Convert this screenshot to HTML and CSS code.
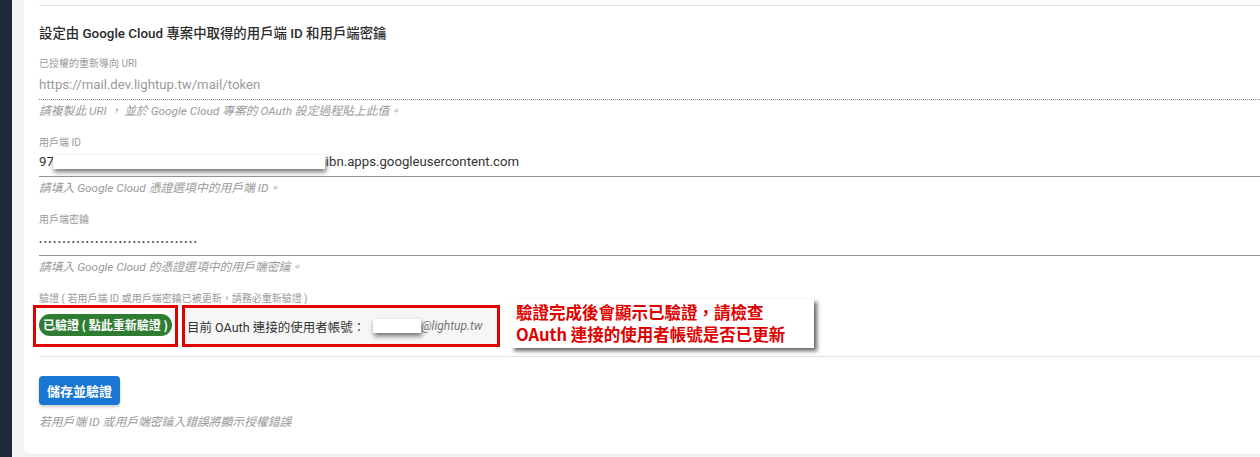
FILE: index.html
```html
<!DOCTYPE html>
<html lang="zh-Hant">
<head>
<meta charset="utf-8">
<title>OAuth 設定</title>
<link rel="stylesheet" href="styles.css">
</head>
<body>
<div class="layout">
  <aside class="sidebar"></aside>
  <main class="main">
    <section class="card">
      <div class="divider top"></div>
      <h2 class="heading">設定由 Google Cloud 專案中取得的用戶端 ID 和用戶端密鑰</h2>

      <div class="field first">
        <div class="label">已授權的重新導向 URI</div>
        <div class="value disabled dotted">https://mail.dev.lightup.tw/mail/token</div>
        <div class="hint">請複製此 URI ， 並於 Google Cloud 專案的 OAuth 設定過程貼上此值。</div>
      </div>

      <div class="field">
        <div class="label">用戶端 ID</div>
        <div class="value solid">97<span class="redact redact-id"></span>ibn.apps.googleusercontent.com</div>
        <div class="hint">請填入 Google Cloud 憑證選項中的用戶端 ID。</div>
      </div>

      <div class="field">
        <div class="label">用戶端密鑰</div>
        <div class="value solid secret">••••••••••••••••••••••••••••••••••</div>
        <div class="hint">請填入 Google Cloud 的憑證選項中的用戶端密鑰。</div>
      </div>

      <div class="field verify">
        <div class="label">驗證 ( 若用戶端 ID 或用戶端密鑰已被更新，請務必重新驗證 )</div>
        <div class="verify-row">
          <div class="mark mark-btn">
            <button class="pill">已驗證 ( 點此重新驗證 )</button>
          </div>
          <div class="mark mark-acct">
            <span class="acct-label">目前 OAuth 連接的使用者帳號：</span>
            <span class="redact redact-acct"></span><span class="acct-domain">@lightup.tw</span>
          </div>
          <div class="callout">
            <div class="callout-line">驗證完成後會顯示已驗證，請檢查</div>
            <div class="callout-line">OAuth 連接的使用者帳號是否已更新</div>
          </div>
        </div>
      </div>

      <div class="divider bottom"></div>

      <button class="save">儲存並驗證</button>
      <div class="hint last">若用戶端 ID 或用戶端密鑰入錯誤將顯示授權錯誤</div>
    </section>
  </main>
</div>
</body>
</html>
```

FILE: styles.css
```css
* { box-sizing: border-box; }
html, body { margin: 0; padding: 0; }
body {
  font-family: Roboto, "Noto Sans CJK TC", "Noto Sans", sans-serif;
  background: #f4f5f7;
  color: #333;
  height: 457px;
  overflow: hidden;
}
.layout { display: flex; height: 457px; }
.sidebar { width: 12px; flex: none; background: #1f2b3b; }
.main { flex: 1; padding-left: 12px; }
.card {
  background: #fff;
  border-radius: 0 0 0 5px;
  padding: 5px 0 24px 15px;
  margin-right: -20px;
  box-shadow: 0 1px 2px rgba(0,0,0,.06);
}
.divider { border-top: 1px solid #e2e2e2; }
.divider.bottom { margin-top: 9px; }
.heading {
  margin: 18px 0 0;
  font-size: 13.4px;
  font-weight: 500;
  line-height: 20px;
  color: #2b2b2b;
}
.field { margin-top: 17px; }
.field.first { margin-top: 13px; }
.label {
  font-size: 10px;
  line-height: 14px;
  color: #999;
}
.value {
  margin-top: 4px;
  font-size: 13.2px;
  line-height: 20px;
  padding-bottom: 4px;
  color: #333;
}
.value.disabled { color: #9a9a9a; }
.value.dotted { border-bottom: 1px dotted #8a8a8a; }
.value.solid { border-bottom: 1px solid #949494; margin-top: 2px; }
.value.secret {
  font-size: 9px;
  letter-spacing: 1.65px;
  margin-top: 5px;
  line-height: 20px;
  padding-bottom: 3px;
  color: #444;
}
.hint {
  margin-top: 3px;
  font-size: 11.8px;
  line-height: 16px;
  font-style: italic;
  color: #9a9a9a;
}
.redact {
  display: inline-block;
  background: #fff;
  box-shadow: 1px 3px 5px rgba(0,0,0,.55);
  vertical-align: middle;
}
.redact-id { width: 272px; height: 14px; margin: -2px 1px 0 -1px; }
.field.verify { margin-top: 17px; }
.verify-row {
  position: relative;
  display: flex;
  gap: 4px;
  margin-left: -6px;
  margin-top: -1px;
}
.mark {
  border: 3px solid #e00000;
  height: 42px;
  display: flex;
  align-items: center;
}
.mark-btn { width: 145px; padding: 0 3px; }
.pill {
  border: none;
  background: #2e7d32;
  color: #fff;
  font-family: "Noto Sans CJK TC", sans-serif;
  font-size: 12px;
  font-weight: 700;
  border-radius: 12px;
  height: 22px;
  width: 134px;
  padding: 0;
  margin-top: -2px;
  line-height: 22px;
}
.mark-acct {
  width: 318px;
  padding-left: 2px;
  background: #f6f6f6;
  font-size: 12.5px;
  white-space: nowrap;
}
.acct-label { color: #333; }
.redact-acct { width: 48px; height: 14px; margin-left: 8px; }
.acct-domain { font-style: italic; color: #777; font-size: 12px; }
.callout {
  position: absolute;
  left: 478px;
  top: -6px;
  width: 303px;
  height: 49px;
  background: #fff;
  box-shadow: 3px 3px 4px rgba(0,0,0,.6);
  padding: 2px 0 0 5px;
  color: #e00000;
  font-family: "Noto Sans CJK TC", sans-serif;
  font-weight: 700;
  font-size: 16.5px;
  white-space: nowrap;
}
.callout-line { line-height: 22px; height: 22px; }
.save {
  display: block;
  margin-top: 19px;
  height: 29px;
  width: 81px;
  border: none;
  border-radius: 4px;
  background: #1976d2;
  color: #fff;
  font-family: "Noto Sans CJK TC", sans-serif;
  font-size: 13px;
  font-weight: 700;
  box-shadow: 0 2px 3px rgba(0,0,0,.2);
  padding: 0;
}
.hint.last { margin-top: 9px; }
```
